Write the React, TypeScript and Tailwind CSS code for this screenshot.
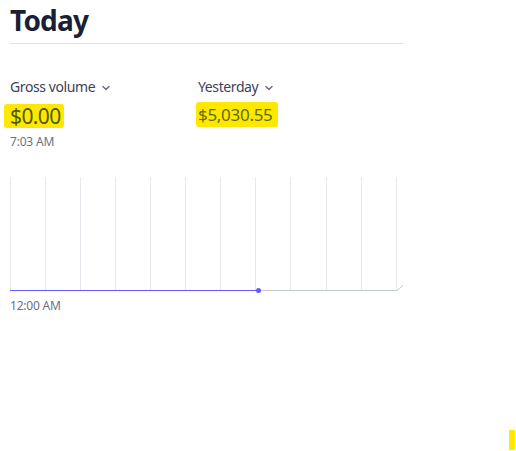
import React from 'react';

const Chevron = () => (
  <svg width="10" height="10" viewBox="0 0 10 10" className="ml-[6px] mt-[2px]">
    <path d="M2 3.5 L5 6.5 L8 3.5" fill="none" stroke="#697386" strokeWidth="1.5" strokeLinecap="round" strokeLinejoin="round" />
  </svg>
);

const gridX = [0, 35, 70, 105, 140, 175, 210, 245, 280, 316, 351, 386];

const App: React.FC = () => {
  return (
    <div className="relative w-[516px] h-[451px] bg-white overflow-hidden" style={{ fontFamily: '"Noto Sans", "Open Sans", sans-serif' }}>
      <div className="ml-[10px] w-[393px]">
        {/* Header */}
        <h1 className="text-[28px] leading-[40px] font-bold text-[#1a1f36] tracking-[-0.8px]">Today</h1>
        <div className="mt-[3px] border-b border-[#dcdfe6]" />

        {/* Metrics */}
        <div className="flex mt-[33px]">
          <div className="w-[188px]">
            <div className="flex items-center text-[14px] leading-[20px] text-[#3c4257] tracking-[-0.4px]">
              Gross volume <Chevron />
            </div>
            <div className="mt-[7px] -ml-[6px]">
              <span className="inline-block bg-[#ffe800] rounded-[3px] pl-[6px] pr-[3px] text-[21px] leading-[24px] text-[#4f5a00] tracking-[-0.6px]">$0.00</span>
            </div>
            <div className="mt-[4px] text-[12px] leading-[16px] text-[#697386] tracking-[-0.2px]">7:03 AM</div>
          </div>
          <div>
            <div className="flex items-center text-[14px] leading-[20px] text-[#3c4257] tracking-[-0.4px]">
              Yesterday <Chevron />
            </div>
            <div className="mt-[5px] -ml-[2px]">
              <span className="inline-block bg-[#ffe800] rounded-[3px] pl-[2px] pr-[6px] py-[2px] text-[17px] leading-[21px] text-[#5f6c00] tracking-[-0.3px]">$5,030.55</span>
            </div>
          </div>
        </div>

        {/* Chart */}
        <svg width="394" height="118" viewBox="0 0 394 118" className="block mt-[27px] -ml-[0.5px]">
          {gridX.map((x) => (
            <line key={x} x1={x + 0.5} y1={0} x2={x + 0.5} y2={113} stroke="#e6e9ee" strokeWidth="1" />
          ))}
          <line x1={248} y1={113.5} x2={387} y2={113.5} stroke="#c1c9d2" strokeWidth="1" />
          <line x1={387} y1={113.5} x2={393} y2={108.5} stroke="#c1c9d2" strokeWidth="1" />
          <line x1={0} y1={113.5} x2={248} y2={113.5} stroke="#635bff" strokeWidth="1" />
          <circle cx={248.5} cy={113.5} r={2.5} fill="#635bff" />
        </svg>
        <div className="mt-[3px] text-[12px] leading-[16px] text-[#697386] tracking-[-0.2px]">12:00 AM</div>
      </div>

      {/* Marker */}
      <div className="absolute right-[1px] bottom-[1px] w-[6px] h-[20px] bg-[#ffe800]" />
    </div>
  );
};

export default App;
